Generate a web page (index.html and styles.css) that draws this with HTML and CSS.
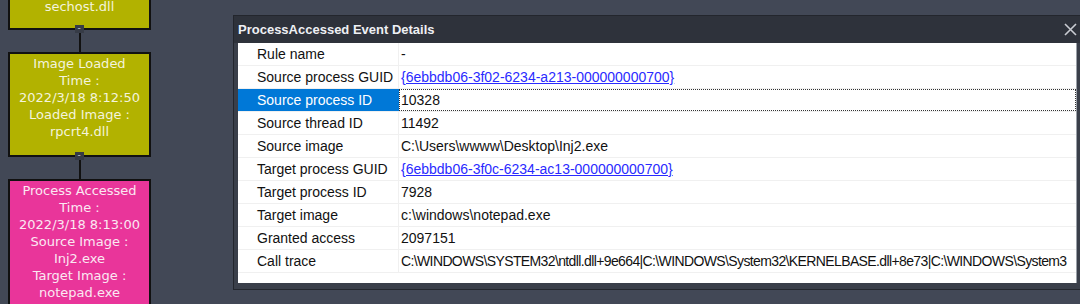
FILE: index.html
```html
<!doctype html>
<html lang="en">
<head>
	<meta charset="utf-8">
	<title>ProcessAccessed Event Details</title>
	<link rel="stylesheet" href="styles.css">
</head>
<body class="canvas">
	<!--цепочка событий-->
	<div class="chain">
		<div class="node olive first">
			<div>sechost.dll</div>
		</div>
		<div class="link"><span class="toggle">-</span></div>
		<div class="node olive">
			<div>Image Loaded</div>
			<div>Time :</div>
			<div>2022/3/18 8:12:50</div>
			<div>Loaded Image :</div>
			<div>rpcrt4.dll</div>
		</div>
		<div class="link"><span class="toggle">-</span></div>
		<div class="node pink">
			<div>Process Accessed</div>
			<div>Time :</div>
			<div>2022/3/18 8:13:00</div>
			<div>Source Image :</div>
			<div>Inj2.exe</div>
			<div>Target Image :</div>
			<div>notepad.exe</div>
		</div>
	</div>

	<!--окно свойств события-->
	<div class="dialog">
		<div class="caption">
			<span>ProcessAccessed Event Details</span>
			<svg class="close" width="13" height="13" viewBox="0 0 13 13">
				<path d="M1 1L12 12M12 1L1 12" stroke="#c9ccd2" stroke-width="1.6" fill="none"/>
			</svg>
		</div>
		<div class="grid">
			<div class="row"><div class="name">Rule name</div><div class="val">-</div></div>
			<div class="row"><div class="name">Source process GUID</div><div class="val"><a>{6ebbdb06-3f02-6234-a213-000000000700}</a></div></div>
			<div class="row selected"><div class="name">Source process ID</div><div class="val">10328</div></div>
			<div class="row"><div class="name">Source thread ID</div><div class="val">11492</div></div>
			<div class="row"><div class="name">Source image</div><div class="val">C:\Users\wwww\Desktop\Inj2.exe</div></div>
			<div class="row"><div class="name">Target process GUID</div><div class="val"><a>{6ebbdb06-3f0c-6234-ac13-000000000700}</a></div></div>
			<div class="row"><div class="name">Target process ID</div><div class="val">7928</div></div>
			<div class="row"><div class="name">Target image</div><div class="val">c:\windows\notepad.exe</div></div>
			<div class="row"><div class="name">Granted access</div><div class="val">2097151</div></div>
			<div class="row"><div class="name">Call trace</div><div class="val trace">C:\WINDOWS\SYSTEM32\ntdll.dll+9e664|C:\WINDOWS\System32\KERNELBASE.dll+8e73|C:\WINDOWS\System3</div></div>
		</div>
	</div>
</body>
</html>
```

FILE: styles.css
```css
.canvas {
	margin: 0;
	width: 1080px;
	height: 304px;
	overflow: hidden;
	background-color: #424856;
	font-family: "DejaVu Sans", sans-serif;
	position: relative;
}

/*узлы графа*/
.chain {
	width: 143px;
	margin-left: 8px;
	margin-top: -20px;
	display: flex;
	flex-direction: column;
	align-items: center;
}

.node {
	width: 100%;
	box-sizing: border-box;
	border: 2px solid #111;
	text-align: center;
	color: #f4f4dc;
	font-size: 13px;
	line-height: 17px;
	padding: 1px 0 15px;
}

.olive {
	background-color: #b2b200;
}

.pink {
	background-color: #e9359a;
	color: #fbe8f2;
}

.first {
	height: 50px;
	display: flex;
	flex-direction: column;
	justify-content: flex-end;
	padding-bottom: 13px;
}

.link {
	height: 22px;
	width: 2px;
	background-color: #111;
	position: relative;
}

.toggle {
	position: absolute;
	left: -4px;
	top: -5px;
	width: 9px;
	height: 8px;
	background-color: #363b46;
	color: #c8ccd4;
	font-size: 9px;
	line-height: 6px;
	text-align: center;
}

/*окно*/
.dialog {
	position: absolute;
	left: 233px;
	top: 15px;
	width: 846px;
	height: 273px;
	background-color: #3a3f4a;
	border: 1px solid #23262d;
	display: flex;
	flex-direction: column;
	font-family: "Liberation Sans", sans-serif;
}

.caption {
	height: 27px;
	background-color: #2e323b;
	color: #eef0f4;
	font-weight: bold;
	font-size: 13px;
	display: flex;
	align-items: center;
	justify-content: space-between;
	padding: 0 3px 0 4px;
}

.grid {
	margin: 0 3px 6px 4px;
	flex: 1;
	background-color: #fff;
	border-right: 1px solid #9aa0a8;
	font-size: 14px;
	color: #111;
	overflow: hidden;
}

.row {
	display: flex;
	height: 23px;
	border-bottom: 1px solid #f0f0f0;
	box-sizing: border-box;
}

.name {
	width: 161px;
	flex: none;
	padding-left: 19px;
	box-sizing: border-box;
	border-right: 1px solid #f0f0f0;
	line-height: 23px;
	white-space: nowrap;
}

.val {
	flex: 1;
	padding-left: 2px;
	line-height: 23px;
	white-space: nowrap;
	overflow: hidden;
}

.trace {
	letter-spacing: -0.62px;
}

.val a {
	color: #2a2aff;
	text-decoration: underline;
}

.selected .name {
	background-color: #0078d7;
	color: #fff;
	border-right-color: #0078d7;
}

.selected .val {
	border: 1px dotted #333;
	line-height: 21px;
	padding-left: 1px;
}
```
